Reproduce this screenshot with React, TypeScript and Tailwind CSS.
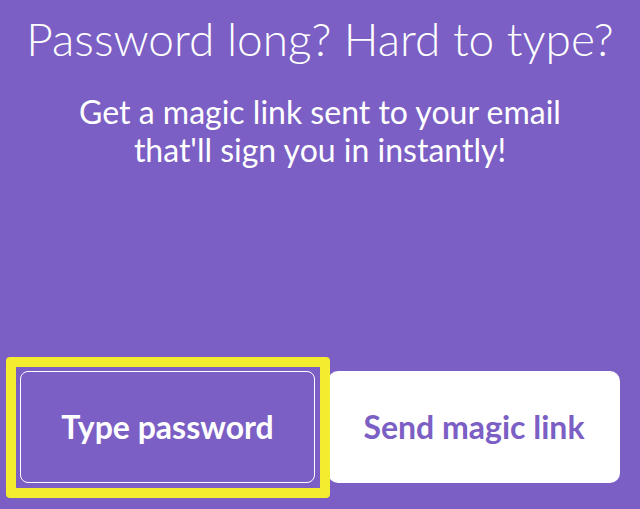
export default function App() {
  return (
    <div className="flex h-[509px] w-full flex-col bg-[#7b5fc4] font-['Lato','Liberation_Sans',sans-serif] text-white">
      <h1 className="pt-[11px] text-center text-[46px] font-light leading-[1.2]">
        Password long? Hard to type?
      </h1>
      <p className="mx-auto mt-[27px] max-w-[540px] text-center text-[32px] leading-[38px]">
        Get a magic link sent to your email that'll sign you in instantly!
      </p>

      <div className="mt-auto flex gap-[13px] px-[20px] pb-[26px]">
        <button className="relative flex h-[112px] w-[295px] items-center justify-center rounded-[8px] border-[1.5px] border-white text-[32px] font-bold">
          <span className="pointer-events-none absolute -inset-[15.5px] rounded-[4px] border-[10px] border-[#f4ec2e]" />
          Type password
        </button>
        <button className="flex h-[112px] flex-1 items-center justify-center rounded-[10px] bg-white text-[32px] font-bold text-[#7b5fc4]">
          Send magic link
        </button>
      </div>
    </div>
  );
}
